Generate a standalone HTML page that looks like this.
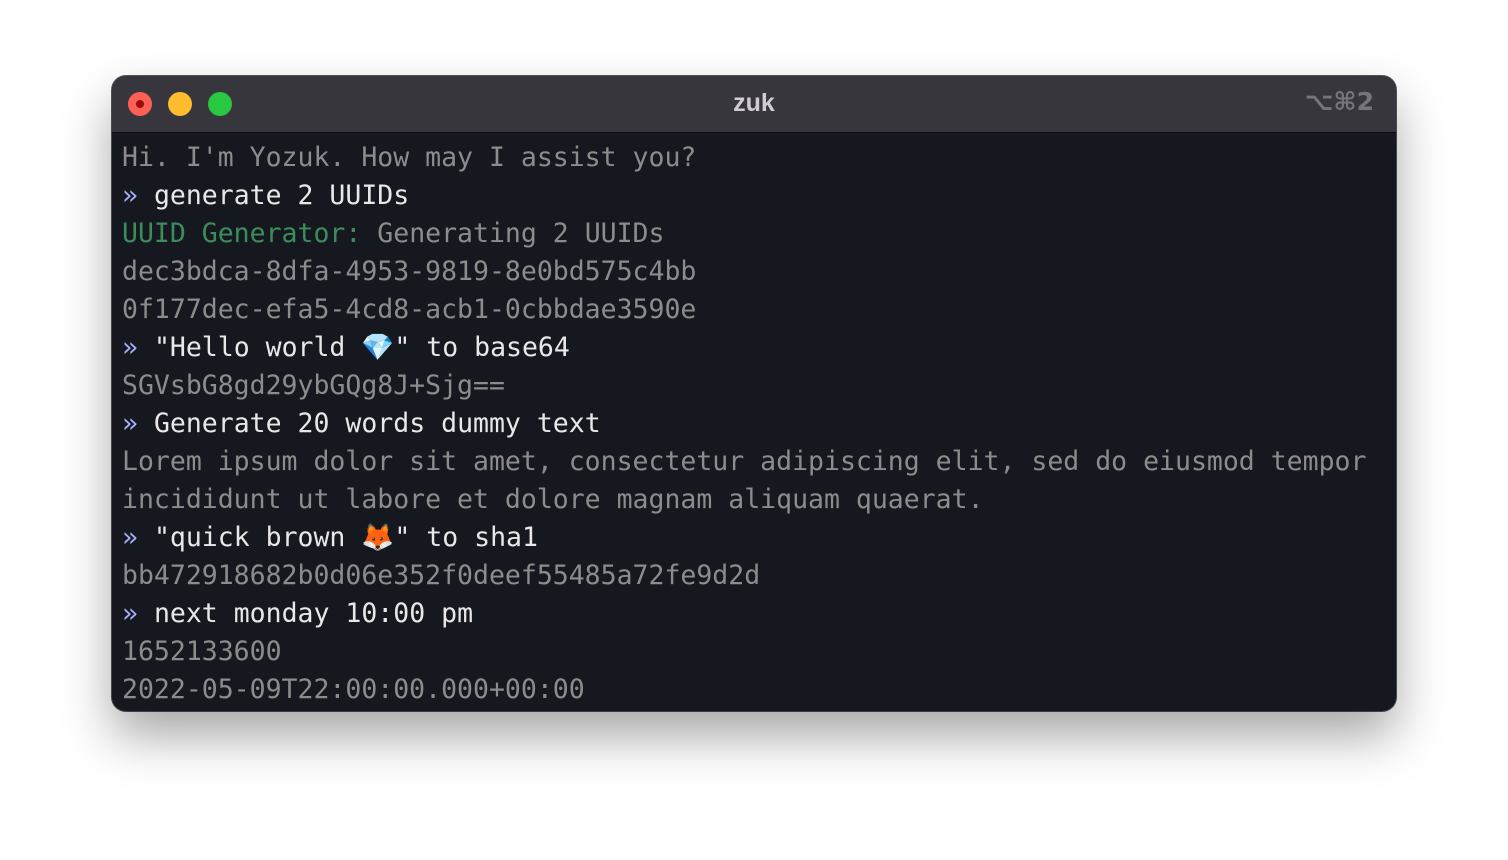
<!DOCTYPE html>
<html><head><meta charset="utf-8"><style>
body{margin:0;width:1508px;height:860px;background:#fff;position:relative;overflow:hidden;font-family:"DejaVu Sans Mono",monospace}
.win{position:absolute;left:112px;top:76px;width:1284px;height:635px;border-radius:14px;background:#16181f;overflow:hidden;box-shadow:0 25px 50px rgba(0,0,0,.35),0 0 0 1px #555}
.bar{height:56px;background:#38363d;border-bottom:1px solid #0a0a0c;position:relative}
.d{position:absolute;top:16px;width:24px;height:24px;border-radius:50%}
.title{position:absolute;left:0;right:0;top:13px;text-align:center;color:#cfcdd3;font:bold 25px "Liberation Sans",sans-serif}
.kb{position:absolute;right:22px;top:11px;color:#77757c;font:bold 25px "DejaVu Sans",sans-serif}
.t{position:absolute;left:10px;top:63px;font-size:26.5px;line-height:38px;white-space:pre;color:#8c8c8c}
.w{color:#e8e8e8}.p{color:#a7adf5}.g{color:#3c8d5c}
</style></head><body>
<div class="win"><div class="bar">
<div class="d" style="left:16px;background:#fe5f57"><div style="position:absolute;left:8px;top:8px;width:8px;height:8px;border-radius:50%;background:#9a0d0b"></div></div>
<div class="d" style="left:56px;background:#febc2e"></div>
<div class="d" style="left:96px;background:#28c840"></div>
<div class="title">zuk</div><div class="kb">⌥⌘2</div></div>
<div class="t">Hi. I'm Yozuk. How may I assist you?
<span class="p">»</span> <span class="w">generate 2 UUIDs</span>
<span class="g">UUID Generator:</span> Generating 2 UUIDs
dec3bdca-8dfa-4953-9819-8e0bd575c4bb
0f177dec-efa5-4cd8-acb1-0cbbdae3590e
<span class="p">»</span> <span class="w">"Hello world 💎" to base64</span>
SGVsbG8gd29ybGQg8J+Sjg==
<span class="p">»</span> <span class="w">Generate 20 words dummy text</span>
Lorem ipsum dolor sit amet, consectetur adipiscing elit, sed do eiusmod tempor
incididunt ut labore et dolore magnam aliquam quaerat.
<span class="p">»</span> <span class="w">"quick brown 🦊" to sha1</span>
bb472918682b0d06e352f0deef55485a72fe9d2d
<span class="p">»</span> <span class="w">next monday 10:00 pm</span>
1652133600
2022-05-09T22:00:00.000+00:00</div>
</div>
</body></html>
